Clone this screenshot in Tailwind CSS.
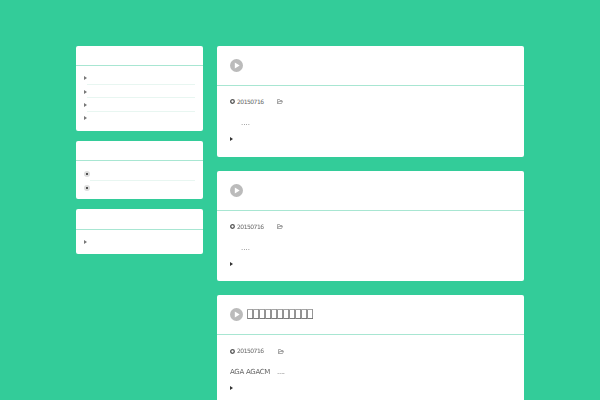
<!DOCTYPE html>
<html lang="en">

<head>
    <meta charset="UTF-8">
    <title>Blog</title>
    <script src="https://cdn.jsdelivr.net/npm/@tailwindcss/browser@4"></script>
</head>

<body class="bg-[#33cc99] font-['DejaVu_Sans',sans-serif] h-[400px] overflow-hidden">
    <div class="flex items-start gap-[14px] w-[448px] mx-auto pt-[46px] [will-change:opacity]">
        <!-- sidebar -->
        <div class="w-[127px] flex flex-col gap-[10px]">
            <div class="bg-white rounded-[2px]">
                <div class="h-[20px] border-b border-[#a8e6d2]"></div>
                <ul class="px-[8px] pt-[5.5px] pb-[5.5px]">
                    <li class="h-[13.4px] flex items-center"><span class="w-0 h-0 border-y-[2px] border-y-transparent border-l-[3px] border-l-[#777]"></span><span class="flex-1 self-end border-b border-[#e8f6f1]"></span></li>
                    <li class="h-[13.4px] flex items-center"><span class="w-0 h-0 border-y-[2px] border-y-transparent border-l-[3px] border-l-[#777]"></span><span class="flex-1 self-end border-b border-[#e8f6f1]"></span></li>
                    <li class="h-[13.4px] flex items-center"><span class="w-0 h-0 border-y-[2px] border-y-transparent border-l-[3px] border-l-[#777]"></span><span class="flex-1 self-end border-b border-[#e8f6f1]"></span></li>
                    <li class="h-[13.4px] flex items-center"><span class="w-0 h-0 border-y-[2px] border-y-transparent border-l-[3px] border-l-[#777]"></span></li>
                </ul>
            </div>
            <div class="bg-white rounded-[2px]">
                <div class="h-[20px] border-b border-[#a8e6d2]"></div>
                <ul class="px-[8px] pt-[7px] pb-[5px]">
                    <li class="h-[13.4px] flex items-center"><span class="w-[6px] h-[6px] rounded-full bg-[#ddd] flex items-center justify-center"><span class="w-[2px] h-[2px] rounded-full bg-[#222]"></span></span><span class="flex-1 self-end border-b border-[#e8f6f1]"></span></li>
                    <li class="h-[13.4px] flex items-center"><span class="w-[6px] h-[6px] rounded-full bg-[#ddd] flex items-center justify-center"><span class="w-[2px] h-[2px] rounded-full bg-[#222]"></span></span></li>
                </ul>
            </div>
            <div class="bg-white rounded-[2px]">
                <div class="h-[21px] border-b border-[#a8e6d2]"></div>
                <ul class="px-[8px] pt-[5px] pb-[6px]">
                    <li class="h-[13px] flex items-center"><span class="w-0 h-0 border-y-[2px] border-y-transparent border-l-[3px] border-l-[#777]"></span></li>
                </ul>
            </div>
        </div>

        <!-- posts -->
        <div class="w-[307px] flex flex-col gap-[14px]">
            <article class="bg-white rounded-[2px] h-[111px]">
                <div class="h-[40px] border-b border-[#a8e6d2] px-[13px] pb-[1px] flex items-center">
                    <svg class="w-[13px] h-[13px]" viewBox="0 0 14 14"><circle cx="7" cy="7" r="7" fill="#bbb"/><path d="M5.2 3.8v6.4L10.4 7z" fill="#fff"/></svg>
                </div>
                <div class="px-[13px] pt-[11.5px]">
                    <div class="flex items-center text-[6px] tracking-[-0.5px] leading-[8px] text-[#666]">
                        <svg class="w-[5px] h-[5px] mr-[2px]" viewBox="0 0 10 10"><circle cx="5" cy="5" r="3.6" fill="none" stroke="#555" stroke-width="2.6"/></svg>
                        <span>20150716</span>
                        <svg class="w-[6px] h-[5px] ml-[13px]" viewBox="0 0 12 10"><path d="M1 9V1h4l1 2h4v2M1 9h8l2-4H3z" fill="none" stroke="#888" stroke-width="1.4"/></svg>
                    </div>
                    <p class="mt-[11.5px] pl-[11px] text-[7px] leading-[12px] text-[#666]">....</p>
                    <div class="mt-[8px] w-0 h-0 border-y-[2px] border-y-transparent border-l-[3px] border-l-[#333]"></div>
                </div>
            </article>
            <article class="bg-white rounded-[2px] h-[110px]">
                <div class="h-[40px] border-b border-[#a8e6d2] px-[13px] pb-[1px] flex items-center">
                    <svg class="w-[13px] h-[13px]" viewBox="0 0 14 14"><circle cx="7" cy="7" r="7" fill="#bbb"/><path d="M5.2 3.8v6.4L10.4 7z" fill="#fff"/></svg>
                </div>
                <div class="px-[13px] pt-[11.5px]">
                    <div class="flex items-center text-[6px] tracking-[-0.5px] leading-[8px] text-[#666]">
                        <svg class="w-[5px] h-[5px] mr-[2px]" viewBox="0 0 10 10"><circle cx="5" cy="5" r="3.6" fill="none" stroke="#555" stroke-width="2.6"/></svg>
                        <span>20150716</span>
                        <svg class="w-[6px] h-[5px] ml-[13px]" viewBox="0 0 12 10"><path d="M1 9V1h4l1 2h4v2M1 9h8l2-4H3z" fill="none" stroke="#888" stroke-width="1.4"/></svg>
                    </div>
                    <p class="mt-[11.5px] pl-[11px] text-[7px] leading-[12px] text-[#666]">....</p>
                    <div class="mt-[8px] w-0 h-0 border-y-[2px] border-y-transparent border-l-[3px] border-l-[#333]"></div>
                </div>
            </article>
            <article class="bg-white rounded-[2px] h-[110px]">
                <div class="h-[40px] border-b border-[#a8e6d2] px-[13px] pb-[1px] flex items-center gap-[4px]">
                    <svg class="w-[13px] h-[13px]" viewBox="0 0 14 14"><circle cx="7" cy="7" r="7" fill="#bbb"/><path d="M5.2 3.8v6.4L10.4 7z" fill="#fff"/></svg>
                    <h2 class="text-[11px] tracking-[-0.6px] text-[#555]">&#xE000;&#xE001;&#xE002;&#xE003;&#xE004;&#xE005;&#xE006;&#xE007;&#xE008;&#xE009;&#xE00A;</h2>
                </div>
                <div class="px-[13px] pt-[12px]">
                    <div class="flex items-center text-[6px] tracking-[-0.5px] leading-[8px] text-[#666]">
                        <svg class="w-[5px] h-[5px] mr-[2px]" viewBox="0 0 10 10"><circle cx="5" cy="5" r="3.6" fill="none" stroke="#555" stroke-width="2.6"/></svg>
                        <span>20150716</span>
                        <svg class="w-[6px] h-[5px] ml-[14px]" viewBox="0 0 12 10"><path d="M1 9V1h4l1 2h4v2M1 9h8l2-4H3z" fill="none" stroke="#888" stroke-width="1.4"/></svg>
                    </div>
                    <p class="mt-[11px] text-[7px] tracking-[-0.3px] leading-[12px] text-[#666]">AGA AGACM<span class="ml-[7px]">....</span></p>
                    <div class="mt-[8px] w-0 h-0 border-y-[2px] border-y-transparent border-l-[3px] border-l-[#333]"></div>
                </div>
            </article>
        </div>
    </div>
</body>

</html>
